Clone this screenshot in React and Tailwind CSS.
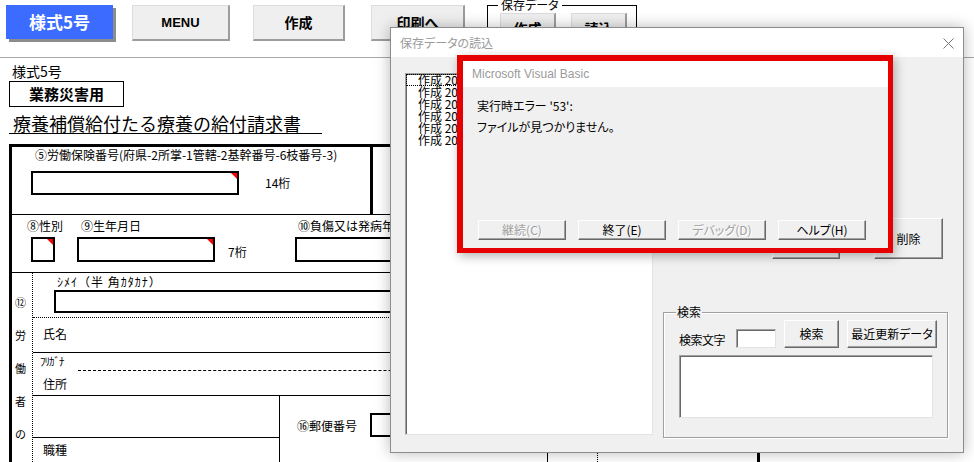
const raised =
  "flex items-center justify-center bg-[#f0f0f0] border border-t-white border-l-white border-r-[#696969] border-b-[#696969] shadow-[inset_-1px_-1px_0_#a0a0a0]";
const sunken =
  "bg-white border border-t-[#a0a0a0] border-l-[#a0a0a0] border-r-[#e3e3e3] border-b-[#e3e3e3] shadow-[inset_1px_1px_0_#696969]";
const toolBtn =
  "flex items-center justify-center bg-[#efefef] border-t border-l border-t-[#dcdcdc] border-l-[#dcdcdc] border-r-2 border-b-2 border-r-[#9c9c9c] border-b-[#9c9c9c] font-bold";
const palt = "[font-feature-settings:'palt']";

function Field({ className }) {
  return (
    <div className={`relative border-2 border-black bg-white ${className}`}>
      <span className="absolute right-0 top-0 border-l-[6px] border-l-transparent border-t-[6px] border-t-[#ff0000]" />
    </div>
  );
}

function Toolbar() {
  return (
    <div className="h-[58px] border-b border-[#a8a8a8] flex items-start">
      <div className="ml-[6px] mt-[5px] w-[107px] h-[34px] bg-[#3b6cff] shadow-[3px_3px_0_#8c8c8c] text-white text-[17px] font-bold flex items-center justify-center">
        様式5号
      </div>
      <div className={`ml-[19px] mt-[5px] w-[98px] h-[36px] text-[13px] font-['Liberation_Sans',sans-serif] ${toolBtn}`}>
        MENU
      </div>
      <div className={`ml-[23px] mt-[5px] w-[92px] h-[36px] text-[14px] ${toolBtn}`}>作成</div>
      <div className={`ml-[26px] mt-[5px] w-[94px] h-[36px] text-[14px] ${toolBtn}`}>印刷へ</div>
      <div className="relative ml-[22px] mt-[5px] w-[150px] h-[60px] border border-black">
        <span className={`absolute left-[10px] top-[-8px] bg-white px-[3px] text-[12px] leading-[14px] ${palt}`}>
          保存データ
        </span>
        <div className="flex pl-[12px] pt-[7px]">
          <div className={`w-[56px] h-[32px] text-[14px] ${toolBtn}`}>作成</div>
          <div className={`ml-[15px] w-[56px] h-[32px] text-[14px] ${toolBtn}`}>読込</div>
        </div>
      </div>
    </div>
  );
}

function Sheet() {
  return (
    <div className="pl-[9px]">
      <div className="h-[23px] pl-[3px] pt-[6px] text-[14px] leading-[15px]">様式5号</div>
      <div className="w-[115px] h-[26px] border border-black flex items-center justify-center font-bold text-[15px]">
        業務災害用
      </div>
      <div className="mt-[6px] w-[313px] pl-[4px] border-b border-black text-[18px] leading-[20px]">
        療養補償給付たる療養の給付請求書
      </div>
      <div className="mt-[10px] w-[751px] border-t-[3px] border-l-[3px] border-r-[3px] border-black text-[12px] leading-[14px]">
        {/* row 1 */}
        <div className="flex h-[68px] border-b border-black">
          <div className="w-[358px] pt-[1px]">
            <div className="pl-[23px]">⑤労働保険番号(府県-2所掌-1管轄-2基幹番号-6枝番号-3)</div>
            <div className="flex items-center pl-[19px] mt-[9px]">
              <Field className="w-[208px] h-[24px]" />
              <span className="ml-[26px]">14桁</span>
            </div>
          </div>
          <div className="flex-1 border-l-[3px] border-black" />
        </div>
        {/* row 2 */}
        <div className="h-[58px] border-b border-black pt-[4px]">
          <div className="flex pl-[15px]">
            <span className="w-[54px]">⑧性別</span>
            <span className="w-[217px]">⑨生年月日</span>
            <span>⑩負傷又は発病年月日</span>
          </div>
          <div className="flex items-end pl-[19px] mt-[4px]">
            <Field className="w-[24px] h-[25px]" />
            <Field className="ml-[22px] w-[138px] h-[25px]" />
            <span className="ml-[13px] w-[67px] pb-[3px]">7桁</span>
            <div className="w-[200px] h-[25px] border-2 border-black" />
          </div>
        </div>
        {/* row 3 */}
        <div className="flex">
          <div className="w-[21px] border-r border-dotted border-black pt-[13px] pl-[3px] text-[11px] leading-[33px] flex flex-col">
            <span>⑫</span>
            <span>労</span>
            <span>働</span>
            <span>者</span>
            <span>の</span>
          </div>
          <div className="flex-1">
            <div className="h-[45px] border-b border-dotted border-black pt-[2px]">
              <div className="pl-[24px] tracking-[1px]">ｼﾒｲ（半 角ｶﾀｶﾅ）</div>
              <div className="ml-[21px] mt-[1px] w-[420px] h-[23px] border-2 border-black" />
            </div>
            <div className="h-[35px] border-b border-black pt-[9px] pl-[10px]">氏名</div>
            <div className="h-[43px] border-b border-black">
              <div className="flex h-[18px]">
                <span className="w-[45px] pl-[7px] pt-[3px] text-[11px] leading-[11px] tracking-[-1px]">ﾌﾘｶﾞﾅ</span>
                <div className="flex-1 border-b border-dashed border-black" />
              </div>
              <div className="pl-[10px] mt-[6px]">住所</div>
            </div>
            <div className="flex h-[70px]">
              <div className="w-[246px]">
                <div className="h-[42px] border-b border-black" />
                <div className="pl-[10px] pt-[5px]">職種</div>
              </div>
              <div className="flex flex-1 border-l border-black">
                <div className="w-[267px] flex items-start pl-[17px] pt-[17px]">
                  <span className="w-[73px] mt-[6px]">⑯郵便番号</span>
                  <div className="w-[120px] h-[24px] border-2 border-black" />
                </div>
                <div className="w-[50px] border-l border-black" />
                <div className="flex-1 border-l border-dotted border-black" />
              </div>
            </div>
          </div>
        </div>
      </div>
    </div>
  );
}

function LoadDialog() {
  const items = ["作成 2020/04/01", "作成 2020/05/12", "作成 2020/06/03", "作成 2020/07/21", "作成 2020/08/18", "作成 2020/09/30"];
  return (
    <div className="absolute left-[390px] top-[27px] w-[574px] h-[426px] bg-[#f0f0f0] border border-[#8c8c8c] shadow-[0_0_14px_rgba(0,0,0,0.28)] flex flex-col text-[12px] leading-[14px]">
      <div className="h-[29px] bg-white flex items-center justify-between pl-[9px] pr-[9px]">
        <span className={`text-[#9b9b9b] ${palt}`}>保存データの読込</span>
        <svg width="11" height="11" viewBox="0 0 11 11" className="mt-[1px]">
          <path d="M0.5 0.5L10.5 10.5M10.5 0.5L0.5 10.5" stroke="#767676" strokeWidth="1" />
        </svg>
      </div>
      <div className="flex pl-[14px] pt-[16px]">
        <div className={`w-[248px] h-[362px] overflow-hidden ${sunken}`}>
          {items.map((t, i) => (
            <div
              key={i}
              className={`pl-[12px] h-[12px] leading-[12px] whitespace-nowrap ${
                i === 0 ? "outline outline-1 outline-dotted outline-black -outline-offset-1" : ""
              }`}
            >
              {t}
            </div>
          ))}
        </div>
        <div className="ml-[10px] w-[285px]">
          <div className="flex mt-[145px]">
            <div className={`ml-[109px] w-[68px] h-[41px] ${raised}`}>読込</div>
            <div className={`ml-[34px] w-[69px] h-[41px] ${raised}`}>削除</div>
          </div>
          <div className="relative mt-[53px] w-[285px] h-[126px] border border-[#a0a0a0] shadow-[inset_1px_1px_0_#fff,1px_1px_0_#fff]">
            <span className="absolute left-[12px] top-[-8px] bg-[#f0f0f0] px-[1px]">検索</span>
            <div className="flex items-end pl-[15px] pt-[7px]">
              <span className="w-[57px] pb-[1px] tracking-[-0.5px]">検索文字</span>
              <div className={`w-[40px] h-[19px] ${sunken}`} />
              <div className={`ml-[8px] w-[55px] h-[28px] ${raised}`}>検索</div>
              <div className={`ml-[8px] w-[90px] h-[28px] ${palt} ${raised}`}>最近更新データ</div>
            </div>
            <div className={`ml-[15px] mt-[7px] w-[254px] h-[63px] ${sunken}`} />
          </div>
        </div>
      </div>
    </div>
  );
}

function ErrorDialog() {
  const btn = `w-[88px] h-[20px] ${raised}`;
  const off = "text-[#a0a0a0] [text-shadow:1px_1px_0_#fff]";
  return (
    <div className="absolute left-[457px] top-[55px] w-[436px] h-[198px] border-t-[6px] border-l-[6px] border-r-[5px] border-b-[5px] border-[#e60000] bg-[#f0f0f0] shadow-[2px_3px_10px_rgba(0,0,0,0.3)] flex flex-col text-[12px] leading-[14px]">
      <div className="h-[26px] bg-white flex items-center pl-[9px] text-[#9a9a9a] font-['Liberation_Sans',sans-serif]">
        Microsoft Visual Basic
      </div>
      <div className={`pl-[14px] mt-[12px] ${palt}`}>実行時エラー '53':</div>
      <div className={`pl-[14px] mt-[7px] ${palt}`}>ファイルが見つかりません。</div>
      <div className={`flex gap-[12px] pl-[15px] mt-auto mb-[8px] ${palt}`}>
        <div className={`${btn} ${off}`}>継続(C)</div>
        <div className={btn}>終了(E)</div>
        <div className={`${btn} ${off}`}>デバッグ(D)</div>
        <div className={btn}>ヘルプ(H)</div>
      </div>
    </div>
  );
}

export default function App() {
  return (
    <div className="relative w-[974px] h-[462px] overflow-hidden bg-white text-black font-['Noto_Sans_CJK_JP',sans-serif]">
      <Toolbar />
      <Sheet />
      <LoadDialog />
      <ErrorDialog />
    </div>
  );
}
